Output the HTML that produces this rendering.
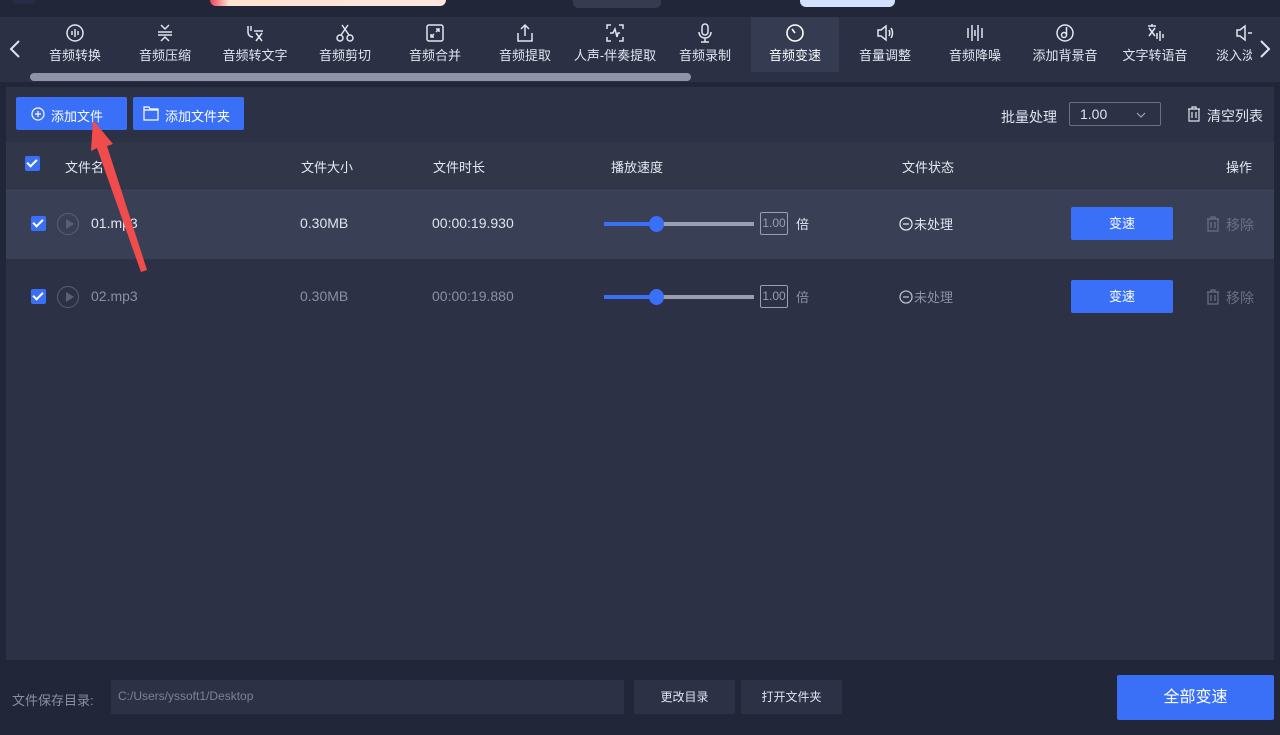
<!DOCTYPE html>
<html><head><meta charset="utf-8"><style>
*{margin:0;padding:0;box-sizing:border-box}
body{width:1280px;height:735px;background:#222639;font-family:"Liberation Sans","Noto Sans CJK SC",sans-serif;color:#dfe3ee;position:relative;overflow:hidden;font-size:13px}
.abs{position:absolute}
.tb{left:0;top:17px;width:1280px;height:65px;background:#2b3044}
.it{position:absolute;top:0;width:90px;height:55px;text-align:center;font-size:13px;color:#e2e6f0}
.it svg{display:block;margin:6px auto 2px;width:20px;height:20px}
.it.act{background:#353b50}
.it span{white-space:nowrap}
.panel{left:6px;top:87px;width:1268px;height:573px;background:#2c3145}
.btn{background:#3a6ff7;color:#fff;border-radius:2px;font-size:13px}
.hdr{left:6px;top:142px;width:1268px;height:46px;background:#313649;font-size:13px;color:#e6e9f1}
.row{left:6px;width:1268px;height:70px}
.cb{width:15px;height:15px;background:#3a6ff7;border-radius:2px}
.cb:after{content:"";position:absolute;left:4px;top:1px;width:4px;height:8px;border:solid #fff;border-width:0 2px 2px 0;transform:rotate(45deg)}
.play{width:22px;height:22px;border:1px solid #596075;border-radius:50%}
.play:after{content:"";position:absolute;left:8px;top:5px;border-left:8px solid #596075;border-top:5px solid transparent;border-bottom:5px solid transparent}
</style></head><body>
<div class="abs" style="left:12px;top:0;width:24px;height:4px;background:#262c48;border-radius:0 0 4px 4px"></div>
<div class="abs" style="left:210px;top:0;width:236px;height:6px;background:linear-gradient(90deg,#f0405a 0,#fde3cf 8%,#fde6e0 100%);border-radius:0 0 8px 8px"></div>
<div class="abs" style="left:573px;top:0;width:88px;height:8px;background:#363b4f;border-radius:0 0 5px 5px"></div>
<div class="abs" style="left:800px;top:0;width:95px;height:7px;background:#d4e0ff;border-radius:0 0 6px 6px"></div>

<div class="abs tb">
 <svg class="abs" style="left:8px;top:22px" width="14" height="20" viewBox="0 0 14 20"><path d="M11 2 L3 10 L11 18" fill="none" stroke="#dfe3ee" stroke-width="2"/></svg>
 <svg class="abs" style="left:1258px;top:22px" width="14" height="20" viewBox="0 0 14 20"><path d="M3 2 L11 10 L3 18" fill="none" stroke="#dfe3ee" stroke-width="2"/></svg>
 <div class="it" style="left:30px"><svg viewBox="0 0 20 20" fill="none" stroke="#e2e6f0" stroke-width="1.5"><circle cx="10" cy="10" r="8"/><path d="M7 8v4M10 6v8M13 8v4"/></svg><span>音频转换</span></div>
 <div class="it" style="left:120px"><svg viewBox="0 0 20 20" fill="none" stroke="#e2e6f0" stroke-width="1.5"><path d="M6 2l4 4 4-4M3 9h14M3 12h14M6 18l4-4 4 4"/></svg><span>音频压缩</span></div>
 <div class="it" style="left:210px"><svg viewBox="0 0 20 20" fill="none" stroke="#e2e6f0" stroke-width="1.5"><path d="M3 3v6c0 3 2 5 5 5M6 3v5M9 8h9M11 10l6 8M17 10l-6 8"/></svg><span>音频转文字</span></div>
 <div class="it" style="left:300px"><svg viewBox="0 0 20 20" fill="none" stroke="#e2e6f0" stroke-width="1.5"><circle cx="5" cy="15" r="3"/><circle cx="15" cy="15" r="3"/><path d="M6 12L13 2M14 12L7 2"/></svg><span>音频剪切</span></div>
 <div class="it" style="left:390px"><svg viewBox="0 0 20 20" fill="none" stroke="#e2e6f0" stroke-width="1.5"><rect x="2" y="2" width="16" height="16" rx="2"/><path d="M6 14l3-3M6 11v3h3M14 6l-3 3M14 9V6h-3"/></svg><span>音频合并</span></div>
 <div class="it" style="left:480px"><svg viewBox="0 0 20 20" fill="none" stroke="#e2e6f0" stroke-width="1.5"><path d="M10 13V2M6 6l4-4 4 4M3 10v8h14v-8"/></svg><span>音频提取</span></div>
 <div class="it" style="left:570px"><svg viewBox="0 0 20 20" fill="none" stroke="#e2e6f0" stroke-width="1.5"><path d="M2 6V2h4M14 2h4v4M18 14v4h-4M6 18H2v-4M5 10h3l2-4 2 8 1-4h2"/></svg><span>人声-伴奏提取</span></div>
 <div class="it" style="left:660px"><svg viewBox="0 0 20 20" fill="none" stroke="#e2e6f0" stroke-width="1.5"><rect x="7" y="1" width="6" height="11" rx="3"/><path d="M4 9c0 4 3 6 6 6s6-2 6-6M10 15v4M6 19h8"/></svg><span>音频录制</span></div>
 <div class="it act" style="left:751px;width:88px"><svg viewBox="0 0 20 20" fill="none" stroke="#fff" stroke-width="1.6"><circle cx="10" cy="10" r="8"/><path d="M7 6l3 4"/></svg><span style="color:#fff">音频变速</span></div>
 <div class="it" style="left:840px"><svg viewBox="0 0 20 20" fill="none" stroke="#e2e6f0" stroke-width="1.5"><path d="M3 7h3l5-4v14l-5-4H3zM14 7c1 2 1 4 0 6M16 5c2 3 2 7 0 10"/></svg><span>音量调整</span></div>
 <div class="it" style="left:930px"><svg viewBox="0 0 20 20" fill="none" stroke="#e2e6f0" stroke-width="1.5"><path d="M3 5v10M7 2v16M10 7v6M13 2v16M17 5v10"/></svg><span>音频降噪</span></div>
 <div class="it" style="left:1020px"><svg viewBox="0 0 20 20" fill="none" stroke="#e2e6f0" stroke-width="1.5"><circle cx="10" cy="10" r="8"/><circle cx="9" cy="12" r="2.5"/><path d="M11.5 12V4"/></svg><span>添加背景音</span></div>
 <div class="it" style="left:1110px"><svg viewBox="0 0 20 20" fill="none" stroke="#e2e6f0" stroke-width="1.5"><path d="M3 3h8M7 1v2M4 5l6 8M10 5l-6 8M12 10v6M15 8v10M18 11v4"/></svg><span>文字转语音</span></div>
 <div class="it" style="left:1200px;width:52px;overflow:hidden;text-align:left;padding-left:16px"><svg viewBox="0 0 20 20" fill="none" stroke="#e2e6f0" stroke-width="1.5" style="margin-left:18px"><path d="M3 7h3l5-4v14l-5-4H3zM14 10h5"/></svg><span>淡入淡出</span></div>
 <div class="abs" style="left:30px;top:56px;width:661px;height:8px;background:#8e93a6;border-radius:4px"></div>
</div>

<div class="abs panel"></div>
<div class="abs btn" style="left:16px;top:97px;width:111px;height:33px"><svg class="abs" style="left:15px;top:10px" width="14" height="14" viewBox="0 0 14 14" fill="none" stroke="#fff" stroke-width="1.2"><circle cx="7" cy="7" r="6"/><path d="M7 4v6M4 7h6"/></svg><span class="abs" style="left:35px;top:9px">添加文件</span></div>
<div class="abs btn" style="left:133px;top:97px;width:111px;height:33px"><svg class="abs" style="left:10px;top:9px" width="16" height="15" viewBox="0 0 16 15" fill="none" stroke="#fff" stroke-width="1.2"><path d="M1 1h5l1 2h8v11H1zM1 4h14"/></svg><span class="abs" style="left:32px;top:9px">添加文件夹</span></div>
<span class="abs" style="left:1001px;top:107px;font-size:14px">批量处理</span>
<div class="abs" style="left:1069px;top:102px;width:92px;height:24px;border:1px solid #6b7184;border-radius:2px"><span class="abs" style="left:10px;top:3px;font-size:14px">1.00</span><svg class="abs" style="left:66px;top:9px" width="10" height="6" viewBox="0 0 10 6"><path d="M1 1l4 4 4-4" fill="none" stroke="#aab0c0"/></svg></div>
<svg class="abs" style="left:1187px;top:106px" width="14" height="16" viewBox="0 0 14 16" fill="none" stroke="#dfe3ee" stroke-width="1.2"><path d="M1 3h12M5 3V1h4v2M2 3v12h10V3M5 6v6M9 6v6"/></svg>
<span class="abs" style="left:1207px;top:106px;font-size:14px">清空列表</span>

<div class="abs hdr">
 <div class="abs cb" style="left:19px;top:14px"></div>
 <span class="abs" style="left:59px;top:15px">文件名</span>
 <span class="abs" style="left:295px;top:15px">文件大小</span>
 <span class="abs" style="left:427px;top:15px">文件时长</span>
 <span class="abs" style="left:605px;top:15px">播放速度</span>
 <span class="abs" style="left:896px;top:15px">文件状态</span>
 <span class="abs" style="left:1220px;top:15px">操作</span>
</div>

<div class="abs row" style="top:189px;background:#394055">
 <div class="abs cb" style="left:25px;top:27px"></div>
 <div class="abs play" style="left:51px;top:24px"></div>
 <span class="abs" style="left:85px;top:26px;font-size:14px;color:#e2e6f0">01.mp3</span>
 <span class="abs" style="left:294px;top:26px;font-size:14px">0.30MB</span>
 <span class="abs" style="left:426px;top:26px;font-size:14px">00:00:19.930</span>
 <div class="abs" style="left:598px;top:33px;width:150px;height:4px;background:#9a9faf"></div>
 <div class="abs" style="left:598px;top:33px;width:52px;height:4px;background:#3a6ff7"></div>
 <div class="abs" style="left:643px;top:27px;width:15px;height:16px;border-radius:50%;background:#3a6ff7"></div>
 <div class="abs" style="left:754px;top:23px;width:28px;height:23px;border:1px solid #9a9faf;border-radius:2px;font-size:12px;color:#9a9faf;text-align:center;line-height:21px">1.00</div>
 <span class="abs" style="left:790px;top:25px">倍</span>
 <svg class="abs" style="left:893px;top:28px" width="14" height="14" viewBox="0 0 14 14" fill="none" stroke="#dfe3ee" stroke-width="1.3"><circle cx="7" cy="7" r="6"/><path d="M4 7h6"/></svg>
 <span class="abs" style="left:908px;top:25px">未处理</span>
 <div class="abs btn" style="left:1065px;top:18px;width:102px;height:33px;text-align:center;line-height:33px">变速</div>
 <svg class="abs" style="left:1200px;top:27px" width="14" height="16" viewBox="0 0 14 16" fill="none" stroke="#6b7184" stroke-width="1.2"><path d="M1 3h12M5 3V1h4v2M2 3v12h10V3M5 6v6M9 6v6"/></svg>
 <span class="abs" style="left:1220px;top:26px;font-size:14px;color:#6b7184">移除</span>
</div>

<div class="abs row" style="top:262px">
 <div class="abs cb" style="left:25px;top:27px"></div>
 <div class="abs play" style="left:51px;top:24px"></div>
 <span class="abs" style="left:85px;top:26px;font-size:14px;color:#8a90a2">02.mp3</span>
 <span class="abs" style="left:294px;top:26px;font-size:14px;color:#8a90a2">0.30MB</span>
 <span class="abs" style="left:426px;top:26px;font-size:14px;color:#8a90a2">00:00:19.880</span>
 <div class="abs" style="left:598px;top:33px;width:150px;height:4px;background:#9a9faf"></div>
 <div class="abs" style="left:598px;top:33px;width:52px;height:4px;background:#3a6ff7"></div>
 <div class="abs" style="left:643px;top:27px;width:15px;height:16px;border-radius:50%;background:#3a6ff7"></div>
 <div class="abs" style="left:754px;top:23px;width:28px;height:23px;border:1px solid #9a9faf;border-radius:2px;font-size:12px;color:#9a9faf;text-align:center;line-height:21px">1.00</div>
 <span class="abs" style="left:790px;top:25px;color:#8a90a2">倍</span>
 <svg class="abs" style="left:893px;top:28px" width="14" height="14" viewBox="0 0 14 14" fill="none" stroke="#b8bdc9" stroke-width="1.3"><circle cx="7" cy="7" r="6"/><path d="M4 7h6"/></svg>
 <span class="abs" style="left:908px;top:25px;color:#8a90a2">未处理</span>
 <div class="abs btn" style="left:1065px;top:18px;width:102px;height:33px;text-align:center;line-height:33px">变速</div>
 <svg class="abs" style="left:1200px;top:27px" width="14" height="16" viewBox="0 0 14 16" fill="none" stroke="#6b7184" stroke-width="1.2"><path d="M1 3h12M5 3V1h4v2M2 3v12h10V3M5 6v6M9 6v6"/></svg>
 <span class="abs" style="left:1220px;top:26px;font-size:14px;color:#6b7184">移除</span>
</div>

<svg class="abs" style="left:85px;top:118px" width="70" height="160" viewBox="0 0 70 160"><path d="M62 152 L22 28 L28 26 L8 2 L6 33 L12 30 L56 154 Z" fill="#f04c4c"/></svg>

<span class="abs" style="left:12px;top:690px;color:#8a90a2">文件保存目录:</span>
<div class="abs" style="left:111px;top:680px;width:513px;height:34px;background:#2c3145"><span class="abs" style="left:7px;top:9px;font-size:12px;color:#7c8294">C:/Users/yssoft1/Desktop</span></div>
<div class="abs" style="left:634px;top:680px;width:101px;height:34px;background:#2c3145;text-align:center;line-height:34px;font-size:12px">更改目录</div>
<div class="abs" style="left:741px;top:680px;width:101px;height:34px;background:#2c3145;text-align:center;line-height:34px;font-size:12px">打开文件夹</div>
<div class="abs btn" style="left:1117px;top:675px;width:157px;height:45px;text-align:center;line-height:45px;font-size:16px">全部变速</div>
</body></html>
